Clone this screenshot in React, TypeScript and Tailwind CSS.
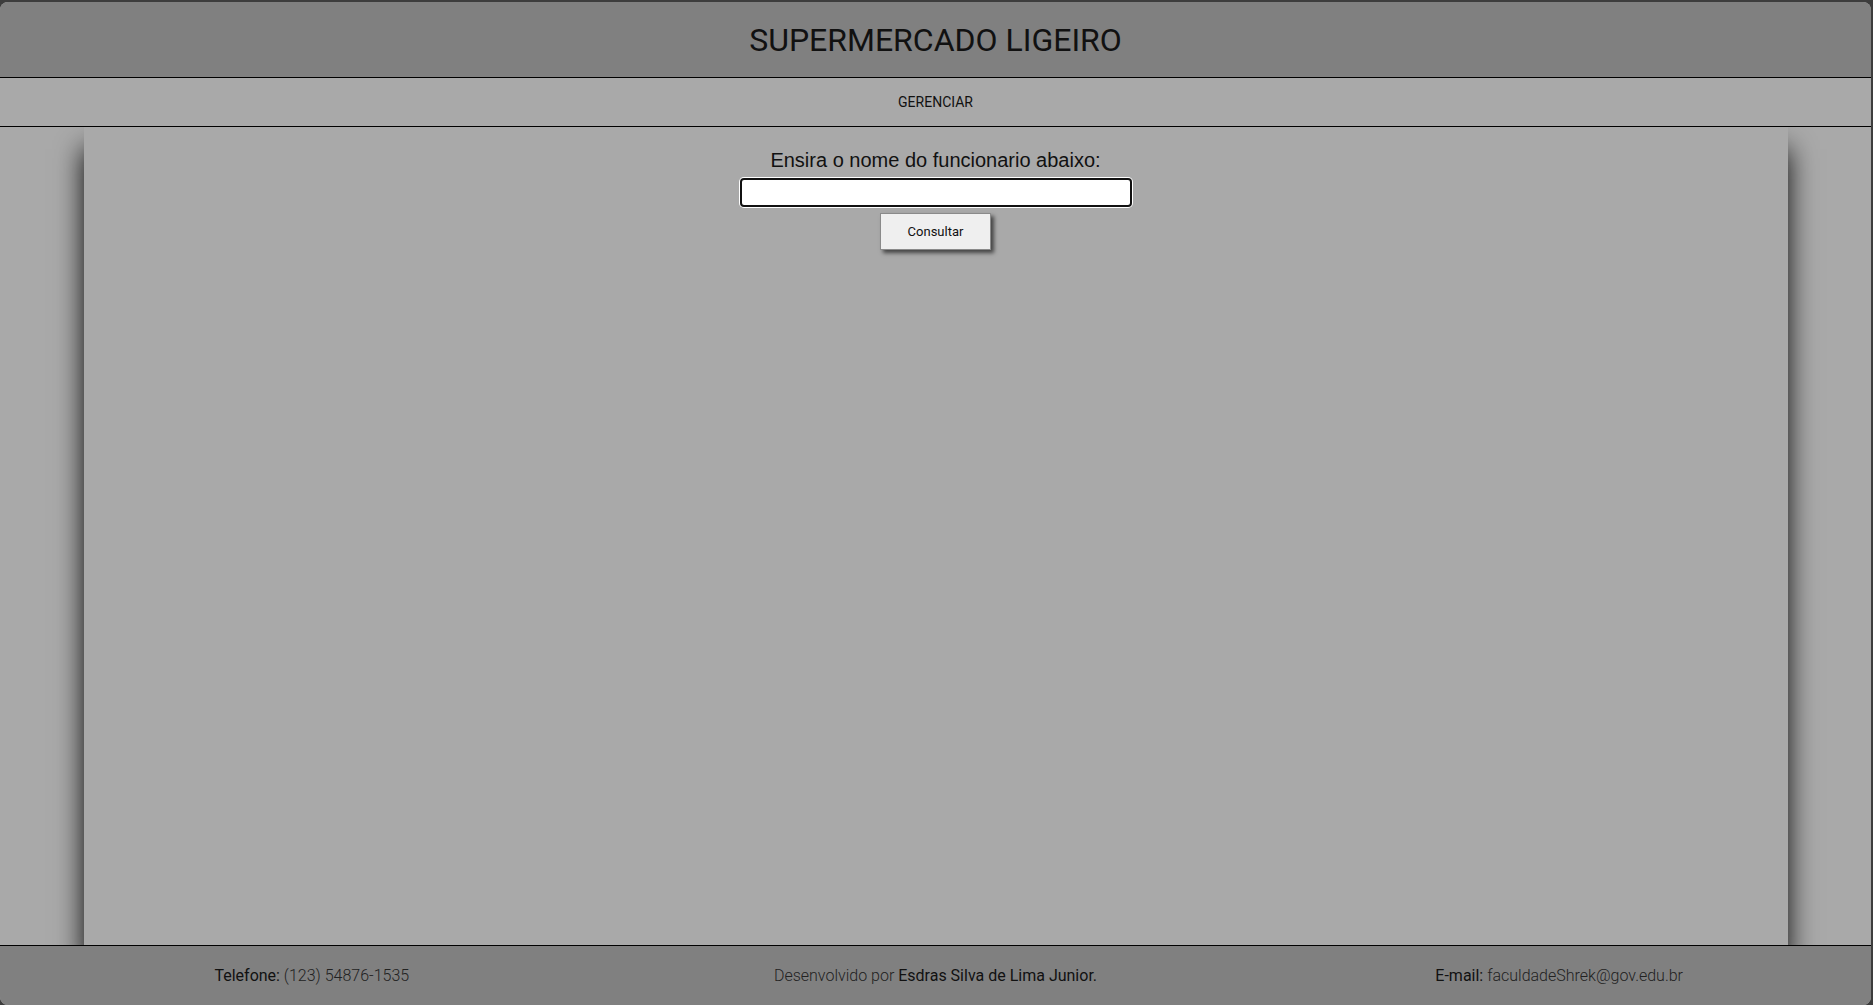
import React from "react";

export default function App() {
  return (
    <div className="w-[1873px] h-[1005px] bg-[#3d3d3d] pt-[2px] pr-[2px] overflow-hidden">
      <div className="w-[1871px] h-[1003px] rounded-[8px] overflow-hidden flex flex-col bg-[#a9a9a9]">
        <header className="h-[76px] shrink-0 bg-[#808080] border-b border-black flex items-center justify-center relative z-10">
          <h1 className="text-[32px] text-[#111] font-['Roboto',sans-serif] leading-none">SUPERMERCADO LIGEIRO</h1>
        </header>
        <nav className="h-[49px] shrink-0 bg-[#a9a9a9] border-b border-black flex items-center justify-center relative z-10">
          <span className="text-[14px] text-[#111] font-['Roboto',sans-serif]">GERENCIAR</span>
        </nav>
        <main className="flex-1 flex justify-center min-h-0">
          <div className="w-[1704px] h-full bg-[#a9a9a9] shadow-[0_22px_26px_rgba(0,0,0,0.95)] flex flex-col items-center pt-[22px]">
            <label className="text-[20px] leading-[23px] text-[#111] font-['Liberation_Sans',Arial,sans-serif]">
              Ensira o nome do funcionario abaixo:
            </label>
            <input
              type="text"
              className="mt-[6px] w-[392px] h-[29px] bg-white border-2 border-[#111] rounded-[4px] ring-1 ring-white outline-none"
            />
            <button className="mt-[6px] w-[111px] h-[37px] bg-[#efefef] border border-[#8a8a8a] text-[13px] text-[#111] font-['Roboto',sans-serif] shadow-[3px_3px_4px_rgba(0,0,0,0.6)]">
              Consultar
            </button>
          </div>
        </main>
        <footer className="h-[60px] shrink-0 bg-[#808080] border-t border-black grid grid-cols-3 items-center text-[16px] font-['Roboto',sans-serif] relative z-10">
          <p className="text-center text-[#222] font-light">
            <span className="font-normal text-[#111]">Telefone:</span> (123) 54876-1535
          </p>
          <p className="text-center text-[#222] font-light">
            Desenvolvido por <span className="font-normal text-[#111]">Esdras Silva de Lima Junior.</span>
          </p>
          <p className="text-center text-[#222] font-light">
            <span className="font-normal text-[#111]">E-mail:</span> faculdadeShrek@gov.edu.br
          </p>
        </footer>
      </div>
    </div>
  );
}
